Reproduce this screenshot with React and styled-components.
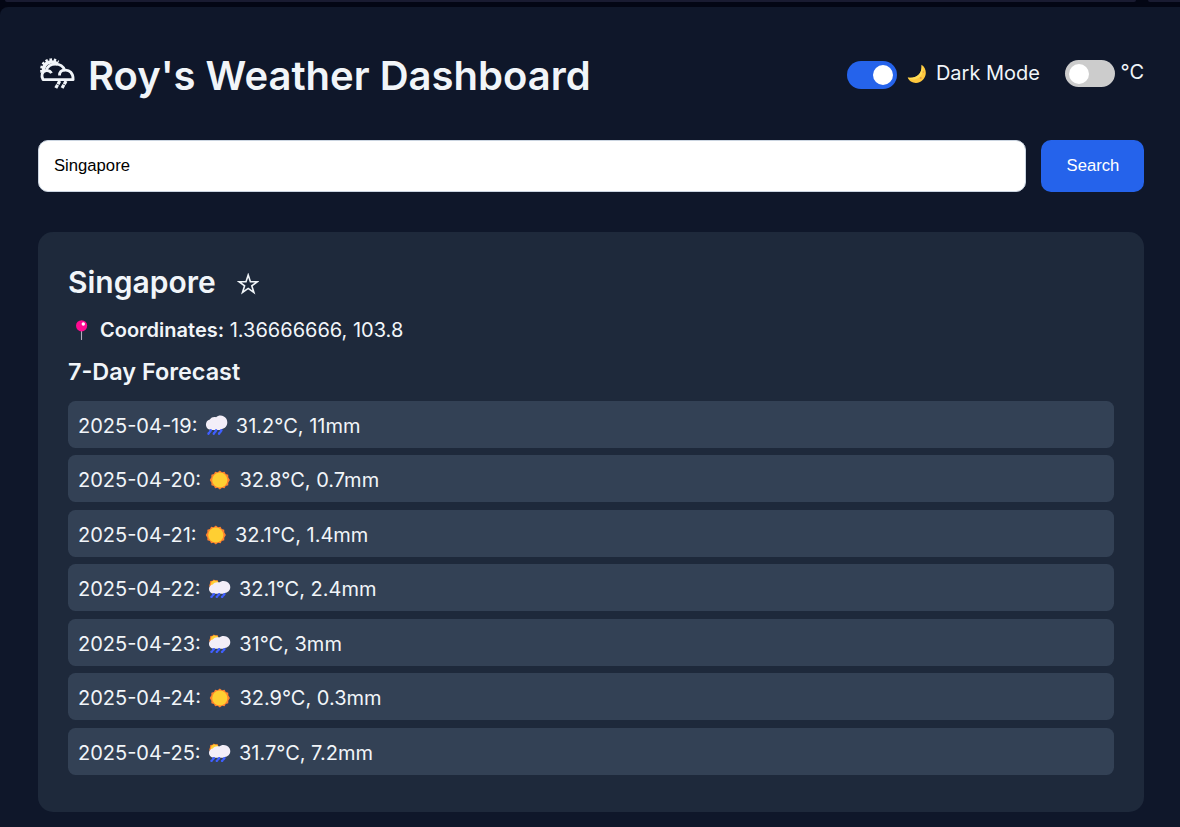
import React, { useState } from "react";
import styled, { createGlobalStyle } from "styled-components";

const GlobalStyle = createGlobalStyle`
  * { box-sizing: border-box; }
  body {
    margin: 0;
    background: #030614;
    color: #f1f5f9;
    font-family: Inter, "Liberation Sans", sans-serif;
    font-size: 20px;
  }
`;

const Window = styled.div`
  height: 827px;
  overflow: hidden;
`;

const TabStrip = styled.div`
  display: flex;
  gap: 12px;
  height: 7px;
`;

const TabEdge = styled.div`
  width: ${(p) => p.$width};
  flex-grow: ${(p) => (p.$grow ? 1 : 0)};
  height: 2px;
  margin-left: ${(p) => (p.$grow ? "5px" : "0")};
  background: #191b31;
  border-radius: ${(p) => (p.$grow ? "0 0 8px 8px" : "0 0 0 8px")};
`;

const Page = styled.main`
  height: 820px;
  padding: 42px 36px 0 38px;
  background: #0f172a;
  border-top-left-radius: 8px;
`;

const Header = styled.header`
  display: flex;
  justify-content: space-between;
  height: 91px;
`;

const Title = styled.h1`
  display: flex;
  align-items: flex-start;
  margin: 0;
  font-size: 40px;
  font-weight: 600;
  line-height: 54px;
  white-space: nowrap;
  svg { margin: 7px 12px 0 0; }
`;

const Controls = styled.div`
  display: flex;
  align-items: flex-start;
  height: 40px;
  padding-top: 11px;
`;

const Toggle = styled.button`
  display: flex;
  align-items: center;
  justify-content: ${(p) => (p.$on ? "flex-end" : "flex-start")};
  width: 50px;
  height: ${(p) => (p.$on ? "28px" : "27px")};
  margin-top: ${(p) => (p.$on ? "1px" : "0")};
  padding: 0 4px;
  border: 0;
  border-radius: 14px;
  background: ${(p) => (p.$on ? "#2563eb" : "#cccccc")};
`;

const Knob = styled.span`
  width: 20px;
  height: 20px;
  border-radius: 50%;
  background: #fff;
`;

const ModeLabel = styled.span`
  display: flex;
  width: 143px;
  margin-right: 25px;
  padding-left: 10px;
  line-height: 26px;
  white-space: nowrap;
  svg { margin: 4px 9px 0 0; }
`;

const UnitLabel = styled.span`
  width: 23px;
  margin-left: 6px;
  line-height: 25px;
  text-indent: -0.5px;
  white-space: nowrap;
`;

const SearchForm = styled.form`
  display: flex;
  gap: 15px;
  height: 52px;
`;

const SearchInput = styled.input`
  flex: 1;
  min-width: 0;
  padding: 0 15px;
  border: 1px solid #cbd5e1;
  border-radius: 10px;
  background: #fff;
  color: #000;
  font: 16.67px "Liberation Sans", Arial, sans-serif;
  outline: none;
`;

const SearchButton = styled.button`
  width: 103px;
  padding: 0 0 0 1px;
  border: 0;
  border-radius: 10px;
  background: #2563eb;
  color: #fff;
  font: 16.67px "Liberation Sans", Arial, sans-serif;
`;

const Card = styled.section`
  height: 580px;
  margin-top: 40px;
  padding: 30px;
  border-radius: 15px;
  background: #1e293b;
`;

const City = styled.h2`
  display: flex;
  margin: 0;
  height: 50px;
  font-size: 30px;
  font-weight: 600;
  line-height: 40px;
  svg { margin: 11px 0 0 21px; }
`;

const Coordinates = styled.p`
  display: flex;
  margin: 0;
  height: 42px;
  line-height: 37px;
  white-space: pre;
  svg { margin: 8px 10px 0 6px; }
  strong { font-weight: 600; }
`;

const ForecastTitle = styled.h3`
  margin: 0;
  height: 46.9px;
  font-size: 23.4px;
  font-weight: 600;
  line-height: 35px;
`;

const Forecast = styled.ul`
  display: grid;
  gap: 7.5px;
  margin: 0;
  padding: 0;
  list-style: none;
`;

const Day = styled.li`
  display: flex;
  height: 47px;
  padding-left: 10px;
  border-radius: 7.5px;
  background: #334155;
  line-height: 50px;
  white-space: nowrap;
  svg { margin: 13px 7px 0 7.4px; }
`;

const LogoIcon = () => (
  <svg width="38" height="36" viewBox="0 0 38 36" fill="none" stroke="#f1f5f9" strokeWidth="2.8" strokeLinejoin="round">
    <path d="M6 16C4.500 11 7.500 6.500 12.500 6c3-.3 5 .5 7 2" strokeWidth="3.600" />
    <path d="M4 16.500C2.300 10 6.500 4 12.800 3.900c3-.2 5.500.8 7.500 2.300" strokeWidth="3" strokeDasharray="2.400 1.700" />
    <path d="M5 23.600C2.900 19.500 3.900 15.500 8.200 14.600 9.700 9.800 13.500 8.200 17.500 8.200c5 0 7.800 2.500 9.100 6 5-.6 8.700 3 8.500 9.400Z" />
    <path d="M8.200 14.600c2.500-.3 4.300.6 5.300 2.600M21.500 19.500c0-3.200 1.900-5.200 5.100-5.300" />
    <path d="m21.700 25-1.700 3.200m-.4.600-1.800 3.200M28 25l-1.700 3.200m-.4.600-1.800 3.200" strokeWidth="3.200" />
  </svg>
);

const MoonIcon = () => (
  <svg width="20" height="20" viewBox="0 0 20 20">
    <path d="M14.600.8C21 5 20 15 13 18 8 20.500 2.500 18 .7 13.500c6 1.500 15-1.500 13.900-12.700Z" fill="#ffc83d" />
    <path d="M14.600.8C18 7 14.500 15 7.500 15.500 4.500 15.700 2 14.800.7 13.500c6 1.500 15-1.500 13.900-12.700Z" fill="#ffdc55" />
    <circle cx="13.800" cy="14" r="1" fill="#e19747" />
    <circle cx="16.300" cy="8" r=".8" fill="#e19747" />
  </svg>
);

const StarIcon = () => (
  <svg width="22" height="22" viewBox="0 0 22 22" fill="none" stroke="#f1f5f9" strokeWidth="1.600">
    <path d="m11.200 2 2.200 6.700h7l-5.600 4.100 2.100 6.700-5.700-4.100-5.700 4.100 2.100-6.700L2 8.700h7Z" />
  </svg>
);

const PinIcon = () => (
  <svg width="16" height="22" viewBox="0 0 16 22">
    <path d="M7.500 11v8.500" stroke="#b4acbc" strokeWidth="1.100" strokeLinecap="round" />
    <circle cx="7.600" cy="5.800" r="5.600" fill="#ff0a91" />
    <circle cx="9.300" cy="4" r="1.700" fill="#fff" />
  </svg>
);

const WeatherIcon = ({ kind }) => {
  if (kind === "sun") {
    return (
      <svg width="24" height="24" viewBox="0 0 24 24">
        <path
          transform="translate(.9 .6) scale(.95)"
          d="m11.500 2 2.300 1.900 2.700-.6 1.200 2.500 2.700.600v2.800l1.700 2.800-1.700 2.800v2.800l-2.700.600-1.200 2.500-2.700-.6-2.300 1.900-2.300-1.900-2.700.6-1.200-2.500-2.700-.6v-2.800L.9 12l1.700-2.800V6.400l2.700-.6 1.200-2.500 2.700.6Z"
          fill="#ff822d"
        />
        <circle cx="11.800" cy="12" r="7.600" fill="#ffcf32" />
      </svg>
    );
  }
  return (
    <svg width="24" height="24" viewBox="0 0 24 24">
      {kind === "sunRain" && (
        <>
          <path d="m2 6.300.3-2.200 2.200-.3 1.300-1.400 1.600 1 2.100-.4.800 2-.8 5.300-7.300.5L1.200 8.800Z" fill="#ff822d" />
          <circle cx="6.800" cy="7.500" r="3.900" fill="#ffcf32" />
        </>
      )}
      <g transform={kind === "rain" ? "translate(.3 -.7)" : "translate(.3 2.1) scale(1 .88)"}>
        <path
          d="M5.500 16.600C-.9 16-.7 7.200 4.500 6.200 6 3.800 8.800 3.200 10.800 4 13.500.9 19 1.600 21.200 5.800c2.300 4.800-.8 9.400-4.700 9.900-1.200 1-2.500.9-3.500.9Z"
          fill="#f3eef8"
        />
        <path
          d="m5.500 17-.8 1.300m6.100-1.300-.8 1.300m6.100-1.300-.8 1.300M3.600 19.700l-.4.600m5.700-.6-.4.600m5.700-.6-.4.600"
          stroke="#3f5fff"
          strokeWidth="2.500"
          strokeLinecap="round"
        />
      </g>
    </svg>
  );
};

const DAYS = [
  ["2025-04-19", "rain", "31.2°C, 11mm"],
  ["2025-04-20", "sun", "32.8°C, 0.7mm"],
  ["2025-04-21", "sun", "32.1°C, 1.4mm"],
  ["2025-04-22", "sunRain", "32.1°C, 2.4mm"],
  ["2025-04-23", "sunRain", "31°C, 3mm"],
  ["2025-04-24", "sun", "32.9°C, 0.3mm"],
  ["2025-04-25", "sunRain", "31.7°C, 7.2mm"],
];

export default function App() {
  const [city, setCity] = useState("Singapore");
  return (
    <Window>
      <GlobalStyle />
      <TabStrip>
        <TabEdge $grow />
        <TabEdge $width="32px" />
      </TabStrip>
      <Page>
        <Header>
          <Title><LogoIcon />Roy's Weather Dashboard</Title>
          <Controls>
            <Toggle $on aria-label="Dark mode"><Knob /></Toggle>
            <ModeLabel><MoonIcon />Dark Mode</ModeLabel>
            <Toggle aria-label="Temperature unit"><Knob /></Toggle>
            <UnitLabel>°C</UnitLabel>
          </Controls>
        </Header>
        <SearchForm onSubmit={(e) => e.preventDefault()}>
          <SearchInput value={city} onChange={(e) => setCity(e.target.value)} aria-label="City" />
          <SearchButton>Search</SearchButton>
        </SearchForm>
        <Card>
          <City>Singapore<StarIcon /></City>
          <Coordinates><PinIcon /><strong>Coordinates:</strong> 1.36666666, 103.8</Coordinates>
          <ForecastTitle>7-Day Forecast</ForecastTitle>
          <Forecast>
            {DAYS.map(([date, kind, text]) => (
              <Day key={date}>{date}:<WeatherIcon kind={kind} />{text}</Day>
            ))}
          </Forecast>
        </Card>
      </Page>
    </Window>
  );
}
